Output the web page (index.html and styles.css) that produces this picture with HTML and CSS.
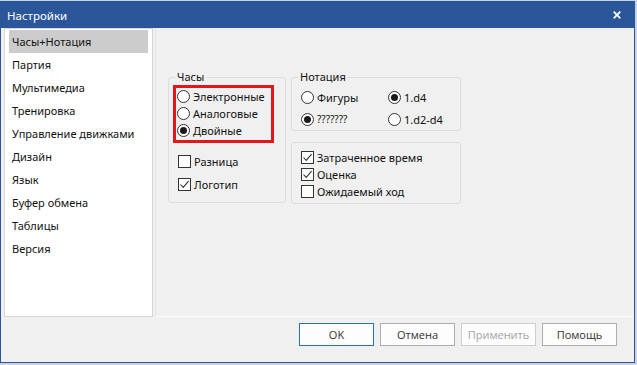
FILE: index.html
```html
<!DOCTYPE html>
<html lang="ru">
<head>
	<meta charset="UTF-8">
	<title>Настройки</title>
	<link rel="stylesheet" href="styles.css">
</head>
<body>
	<div class="window">
		<div class="titlebar">
			<span class="title">Настройки</span>
			<svg class="close" width="8" height="8" viewBox="0 0 8 8"><path d="M0.7 0.7 L7.3 7.3 M7.3 0.7 L0.7 7.3" stroke="#fff" stroke-width="1.7"/></svg>
		</div>

		<div class="main">
			<ul class="nav">
				<li class="active">Часы+Нотация</li>
				<li>Партия</li>
				<li>Мультимедиа</li>
				<li>Тренировка</li>
				<li>Управление движками</li>
				<li>Дизайн</li>
				<li>Язык</li>
				<li>Буфер обмена</li>
				<li>Таблицы</li>
				<li>Версия</li>
			</ul>

			<div class="panel">
				<div class="col-left">
					<fieldset class="group clock">
						<legend>Часы</legend>
						<div class="highlight">
							<div class="opt"><span class="radio"></span>Электронные</div>
							<div class="opt"><span class="radio"></span>Аналоговые</div>
							<div class="opt"><span class="radio on"></span>Двойные</div>
						</div>
						<div class="checks">
							<div class="opt"><span class="box"></span>Разница</div>
							<div class="opt"><span class="box on"><svg width="11" height="11" viewBox="0 0 11 11"><path d="M1.5 5.5 L4.2 8.4 L9.6 2.2" fill="none" stroke="#333" stroke-width="1.1"/></svg></span>Логотип</div>
						</div>
					</fieldset>
				</div>

				<div class="col-right">
					<fieldset class="group notation">
						<legend>Нотация</legend>
						<div class="grid">
							<div class="opt"><span class="radio"></span>Фигуры</div>
							<div class="opt"><span class="radio on"></span>1.d4</div>
							<div class="opt"><span class="radio on"></span><span class="small">???????</span></div>
							<div class="opt"><span class="radio"></span>1.d2-d4</div>
						</div>
					</fieldset>
					<fieldset class="group extras">
						<div class="opt"><span class="box on"><svg width="11" height="11" viewBox="0 0 11 11"><path d="M1.5 5.5 L4.2 8.4 L9.6 2.2" fill="none" stroke="#333" stroke-width="1.1"/></svg></span>Затраченное время</div>
						<div class="opt"><span class="box on"><svg width="11" height="11" viewBox="0 0 11 11"><path d="M1.5 5.5 L4.2 8.4 L9.6 2.2" fill="none" stroke="#333" stroke-width="1.1"/></svg></span>Оценка</div>
						<div class="opt"><span class="box"></span>Ожидаемый ход</div>
					</fieldset>
				</div>
			</div>
		</div>

		<div class="footer">
			<button class="btn default">OK</button>
			<button class="btn">Отмена</button>
			<button class="btn" disabled>Применить</button>
			<button class="btn">Помощь</button>
		</div>
	</div>
</body>
</html>
```

FILE: styles.css
```css
*{margin: 0;padding: 0;box-sizing: border-box;}
body {
	background: #c5d3e3;
	font: 11px "Noto Sans", "Open Sans", sans-serif;
	color: #111;
	padding-top: 1px;
	height: 365px;
	overflow: hidden;
}
.window {
	width: 635px;
	height: 362px;
	border: 1px solid #2b579a;
	background: #f0f0f0;
	display: flex;
	flex-direction: column;
}
.titlebar {
	height: 26px;
	flex: none;
	background: #2b579a;
	color: #fff;
	display: flex;
	align-items: center;
	justify-content: space-between;
	padding: 0 13px 0 6px;
}
.title {
	font-size: 11.5px;
}

.main {
	display: flex;
	height: 289px;
	flex: none;
	padding-left: 3px;
}
.nav {
	width: 149px;
	flex: none;
	border: 1px solid #d6d6d6;
	background: #fff;
	list-style: none;
	padding: 1px 4px;
}
.nav li {
	height: 23px;
	line-height: 23px;
	padding-left: 3px;
	white-space: nowrap;
}
.nav li.active {
	background: #cccccc;
}

.panel {
	flex: 1;
	margin-left: 2px;
	border-left: 1px solid #e2e2e2;
	border-bottom: 1px solid #fbfbfb;
	display: flex;
	gap: 5px;
	padding: 41px 0 0 12px;
}
.col-left {
	width: 118px;
}
.col-right {
	width: 170px;
	display: flex;
	flex-direction: column;
	gap: 11px;
}

.group {
	border: 1px solid #dcdcdc;
	border-radius: 3px;
	padding: 0 4px;
	min-width: 0;
}
.group legend {
	margin-left: 2px;
	padding: 0 2px;
	line-height: 16px;
}

.opt {
	display: flex;
	align-items: center;
	height: 17px;
	white-space: nowrap;
}
.radio {
	width: 13px;
	height: 13px;
	border: 1px solid #333;
	border-radius: 50%;
	background: #fff;
	margin-right: 3px;
	display: flex;
	align-items: center;
	justify-content: center;
	flex: none;
}
.radio.on::after {
	content: "";
	width: 7px;
	height: 7px;
	border-radius: 50%;
	background: #1a1a1a;
}
.box {
	width: 13px;
	height: 13px;
	border: 1px solid #333;
	background: #fff;
	margin-right: 3px;
	display: flex;
	align-items: center;
	justify-content: center;
	flex: none;
}
.small {
	font-size: 10px;
}

.clock {
	padding-bottom: 9px;
}
.highlight {
	width: 101px;
	height: 58px;
	border: 3px solid #e3161b;
}
.highlight .radio {
	margin-left: 1px;
}
.checks {
	margin-top: 10px;
	padding-left: 5px;
	display: flex;
	flex-direction: column;
	gap: 6px;
}

.notation .grid {
	display: grid;
	grid-template-columns: 87px auto;
	grid-auto-rows: 22px;
	padding: 1px 0 0 5px;
}
.notation .opt {
	height: 22px;
}
.extras {
	padding: 6px 4px 3px 9px;
}

.footer {
	display: flex;
	justify-content: flex-end;
	gap: 6px;
	padding: 6px 17px 0 0;
}
.btn {
	width: 75px;
	height: 23px;
	padding: 0;
	background: #fdfdfd;
	border: 1px solid #adadad;
	font: 11px "Open Sans", "Noto Sans", sans-serif;
	color: #333;
}
.btn.default {
	border-color: #2a6ebb;
}
.btn:disabled {
	color: #a3a3a3;
	border-color: #cccccc;
}
```
